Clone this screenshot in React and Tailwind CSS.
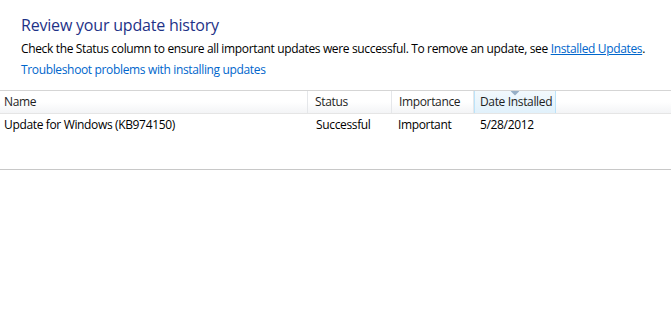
const columns = [
  { label: "Name", width: "w-[308px]" },
  { label: "Status", width: "w-[84px]" },
  { label: "Importance", width: "w-[82px]" },
  { label: "Date Installed", width: "w-[82px]", sorted: true },
];

const updates = [
  { name: "Update for Windows (KB974150)", status: "Successful", importance: "Important", date: "5/28/2012" },
];

function App() {
  return (
    <div className="w-[671px] h-[313px] bg-white text-[12px] tracking-[-0.35px] text-black font-['Open_Sans',sans-serif] overflow-hidden whitespace-nowrap">
      <div className="pl-[21px] pt-[14px]">
        <h1 className="text-[16px] leading-[22px] tracking-[-0.2px] text-[#1e3287]">Review your update history</h1>
        <p className="mt-[4px] leading-[18px]">
          Check the Status column to ensure all important updates were successful. To remove an update, see{" "}
          <span className="text-[#0066cc] underline">Installed Updates</span>.
        </p>
        <p className="mt-[3px] leading-[18px] text-[#0066cc]">Troubleshoot problems with installing updates</p>
      </div>

      <div className="mt-[11px] border-t border-[#d5d5d5]">
        {/* header */}
        <div className="flex h-[23px] bg-gradient-to-b from-white from-50% to-[#f3f4f6] border-b border-[#e5e5e5]">
          {columns.map((col) => (
            <div
              key={col.label}
              className={
                col.sorted
                  ? `${col.width} relative flex items-center pl-[5px] border-x border-[#bce4fa] bg-gradient-to-b from-[#f2f9fd] to-[#e1f1fb]`
                  : `${col.width} flex items-center pl-[7px] border-r border-[#e5e7ea] first:pl-[4px]`
              }
            >
              {col.sorted && (
                <svg className="absolute left-1/2 top-0 -translate-x-1/2" width="9" height="5" viewBox="0 0 9 5">
                  <path d="M0 0h9L4.5 4.5z" fill="#97afc6" />
                </svg>
              )}
              <span className="text-[#1e1e1e]">{col.label}</span>
            </div>
          ))}
          <div className="flex-1" />
        </div>

        {/* rows */}
        <div className="h-[56px] border-b border-[#c8c8c8]">
          {updates.map((u) => (
            <div key={u.name} className="flex h-[22px] items-center">
              <div className="w-[308px] pl-[4px]">{u.name}</div>
              <div className="w-[84px] pl-[8px]">{u.status}</div>
              <div className="w-[82px] pl-[6px]">{u.importance}</div>
              <div className="w-[82px] pl-[6px]">{u.date}</div>
            </div>
          ))}
        </div>
      </div>
    </div>
  );
}

export default App;
